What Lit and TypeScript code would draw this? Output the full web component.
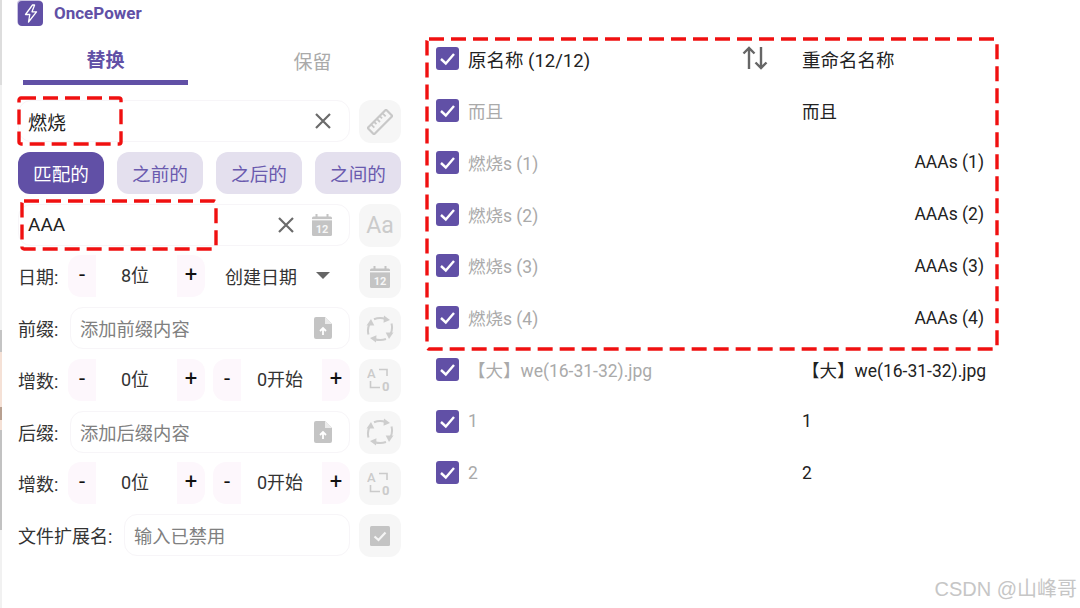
import { LitElement, html, css, svg } from "lit";
import { customElement } from "lit/decorators.js";

const x = svg`<svg width="18" height="18" viewBox="0 0 18 18"><path d="M2 2L16 16M16 2L2 16" stroke="#6b6b6b" stroke-width="2.2" fill="none"/></svg>`;
const cal = svg`<svg width="20" height="22" viewBox="0 0 20 22"><rect x="0" y="2.5" width="20" height="19.5" rx="1.5" fill="#c4c4c4"/><rect x="3.5" y="0" width="2" height="4" fill="#c4c4c4"/><rect x="14.5" y="0" width="2" height="4" fill="#c4c4c4"/><rect x="0" y="5" width="20" height="1.4" fill="#f6f6f6"/><text x="10" y="18.5" text-anchor="middle" font-family="Roboto" font-size="11" font-weight="700" fill="#f6f6f6">12</text></svg>`;
const fileUp = svg`<svg width="18" height="22" viewBox="0 0 18 22"><path d="M2 0H11L18 7V20a2 2 0 0 1-2 2H2a2 2 0 0 1-2-2V2a2 2 0 0 1 2-2Z" fill="#c4c4c4"/><path d="M11 0L18 7H11Z" fill="#ececec"/><path d="M9 18V11.5M6 14L9 11L12 14" stroke="#fff" stroke-width="1.8" fill="none"/></svg>`;
const sync = svg`<svg width="28" height="28" viewBox="0 0 28 28" fill="none" stroke="#cdcdcd" stroke-width="2"><path d="M8 4.2Q14 1.8 19.5 4"/><path d="M18 .5L24 5L17.5 7.8Z" fill="#cdcdcd" stroke="none"/><path d="M25.5 8.5Q27 14 24.5 19"/><path d="M27.5 17.5L23 24L19.7 17.5Z" fill="#cdcdcd" stroke="none"/><path d="M20 24Q14 26.2 8.5 24"/><path d="M10 27.5L4 23L10.5 20.2Z" fill="#cdcdcd" stroke="none"/><path d="M2.5 19.5Q1 14 3.5 9"/><path d="M.5 10.5L5 4L8.3 10.5Z" fill="#cdcdcd" stroke="none"/></svg>`;
const ruler = svg`<svg width="26" height="26" viewBox="0 0 26 26"><g transform="rotate(-45 13 13)"><rect x="0" y="8.5" width="26" height="9" rx="1" fill="none" stroke="#c8c8c8" stroke-width="2.2"/><path d="M5 9V13M9 9V12M13 9V13M17 9V12M21 9V13" stroke="#c8c8c8" stroke-width="1.8"/></g></svg>`;
const seq = svg`<svg width="26" height="26" viewBox="0 0 26 26" fill="none"><text x="0" y="11" font-family="Roboto" font-size="13" font-weight="500" fill="#cbcbcb">A</text><text x="15" y="24" font-family="Roboto" font-size="13" font-weight="700" fill="#cbcbcb">0</text><path d="M12 2.5H20V9M3.5 14V20.5H13" stroke="#cbcbcb" stroke-width="1.6"/></svg>`;
const checkGrey = svg`<svg width="20" height="20" viewBox="0 0 20 20"><rect width="20" height="20" rx="1.5" fill="#c4c4c4"/><path d="M4.5 10.5L8.5 14L15.5 6.5" stroke="#f5f5f5" stroke-width="2.2" fill="none"/></svg>`;
const swap = svg`<svg width="26" height="24" viewBox="0 0 26 24" fill="none" stroke="#666" stroke-width="2.4"><path d="M7 23V2M1.5 7.5L7 2L12.5 7.5"/><path d="M19 1V22M13.5 16.5L19 22L24.5 16.5"/></svg>`;
const tick = svg`<svg width="23" height="23" viewBox="0 0 23 23"><path d="M5 12L9.8 16.5L18 7" stroke="#fff" stroke-width="2.4" fill="none"/></svg>`;
const bolt = svg`<svg width="14" height="19" viewBox="0 0 14 19" fill="none" stroke="#fff" stroke-width="1.3" stroke-linejoin="round"><path d="M8.5 1L1.5 10.5H5.8L4.5 18L12.5 7.8H8L10.6 1Z"/></svg>`;

const rows = [
  { a: "而且", b: "而且", end: false },
  { a: "燃烧s (1)", b: "AAAs (1)", end: true },
  { a: "燃烧s (2)", b: "AAAs (2)", end: true },
  { a: "燃烧s (3)", b: "AAAs (3)", end: true },
  { a: "燃烧s (4)", b: "AAAs (4)", end: true },
  { a: "【大】we(16-31-32).jpg", b: "【大】we(16-31-32).jpg", end: false },
  { a: "1", b: "1", end: false },
  { a: "2", b: "2", end: false },
];

@customElement("app-root")
export class AppRoot extends LitElement {
  static styles = css`
    :host { display: block; position: relative; width: 1080px; height: 608px; overflow: hidden; background: #fff; color: #222;
      font-family: Roboto, "Noto Sans CJK SC", sans-serif; font-size: 18px; }
    * { box-sizing: border-box; }
    .page { display: grid; grid-template-columns: 383px 572px; column-gap: 25px; padding-left: 18px; height: 608px; }
    .strip { position: absolute; left: 0; top: 0; width: 2px; height: 608px;
      background: linear-gradient(#ddd 0 85px, #f1f1f1 85px 330px, #c4c4c4 330px 352px, #f5e1d6 352px 407px, #b8a090 407px 420px, #f5e1d6 420px 430px, #c2c2c2 430px 530px, #f1f1f1 530px); }
    .brand { display: flex; align-items: center; gap: 11px; height: 26px; color: #6150a6; font-size: 17px; font-weight: 700; }
    .logo { width: 25px; height: 25px; border-radius: 4px; background: #6150a6; display: flex; align-items: center; justify-content: center; box-shadow: -1px -1px 0 #c9c2e2; }
    .tabs { display: grid; grid-template-columns: 165px 165px; column-gap: 42px; margin-left: 5px; height: 59px; margin-bottom: 15px; }
    .tab { display: flex; align-items: center; justify-content: center; padding-top: 9px; font-size: 19px; color: #aaa; }
    .tab.on { color: #6150a6; font-weight: 700; border-bottom: 5px solid #6150a6; padding-top: 10px; }
    .form { display: grid; gap: 9.75px; }
    .line { display: grid; grid-template-columns: 1fr 42px; column-gap: 9px; height: 42px; align-items: stretch; }
    .main { display: flex; align-items: center; min-width: 0; padding-bottom: 1px; }
    .label { flex: none; width: 50px; white-space: nowrap; font-size: 18px; color: #333; }
    .label.wide { width: 104px; }
    .field { flex: 1; height: 42px; display: flex; align-items: center; padding: 0 17px 0 9px; border: 1.5px solid #f7f5f8; border-radius: 13px; background: #fff; min-width: 0; font-size: 18.3px; }
    .label + .field { margin-left: 2px; }
    .field .v { flex: 1; color: #222; font-size: 19px; }
    .field .ph { flex: 1; color: #808080; }
    .ico { display: flex; align-items: center; justify-content: center; }
    .ico.x { width: 18px; margin-right: 17px; }
    .ico.x.solo { margin-right: 0; }
    .btn { background: #f6f6f6; border-radius: 12px; display: flex; align-items: center; justify-content: center; }
    .aa { font-size: 23px; color: #cbcbcb; font-weight: 400; }
    .chips { display: grid; grid-template-columns: repeat(4, 86px); column-gap: 13px; height: 42px; }
    .chip { display: flex; align-items: center; justify-content: center; border-radius: 12px; background: #e4e0ee; color: #6a5aae; font-size: 18.6px; }
    .chip.on { background: #6150a6; color: #fff; }
    .stepper { flex: 1; height: 42px; display: grid; grid-template-columns: 28px 1fr 28px; border-radius: 13px; overflow: hidden; background: #fdf7fc; }
    .stepper + .stepper { margin-left: 8px; }
    .stepper span { display: flex; align-items: center; justify-content: center; }
    .stepper .mid { background: #fff; color: #333; font-size: 18px; padding: 0 3px 4px 0; }
    .stepper .pm { font-size: 22px; color: #111; padding-bottom: 3px; }
    .drop { width: 137px; margin-left: 8px; display: flex; align-items: center; padding-left: 12px; color: #333; padding-bottom: 1px; }
    .drop i { margin-left: 19px; width: 0; height: 0; border-left: 7px solid transparent; border-right: 7px solid transparent; border-top: 7px solid #666; }
    .list { display: grid; grid-auto-rows: 51.75px; padding-top: 33px; align-content: start; font-size: 17.5px; }
    .row { display: grid; grid-template-columns: 366px 182px; padding-left: 10px; align-items: center; }
    .src { display: flex; align-items: center; gap: 9px; color: #aaa; white-space: nowrap; }
    .head { font-size: 18.5px; }
    .head .src { color: #222; position: relative; }
    .swap { position: absolute; left: 306px; top: 0; }
    .box { width: 23px; height: 23px; flex: none; background: #6150a6; border-radius: 3px; }
    .dst { color: #222; white-space: nowrap; }
    .dst.end { text-align: right; }
    .mark { position: absolute; pointer-events: none; fill: none; stroke: #f01010; stroke-width: 3.4; stroke-dasharray: 15 7; stroke-linejoin: round; }
    .wm { position: absolute; right: 3px; bottom: 6px; font-size: 20px; color: #c6c6c6; font-family: "Liberation Sans", "Noto Sans CJK SC", sans-serif; white-space: nowrap; }
  `;

  private stepper(v: string) {
    return html`<div class="stepper"><span class="pm">-</span><span class="mid">${v}</span><span class="pm">+</span></div>`;
  }

  render() {
    return html`
      <div class="strip"></div>
      <div class="page">
        <section>
          <div class="brand"><div class="logo">${bolt}</div>OncePower</div>
          <div class="tabs"><div class="tab on">替换</div><div class="tab">保留</div></div>
          <div class="form">
            <div class="line">
              <div class="main"><div class="field"><span class="v">燃烧</span><span class="ico x solo">${x}</span></div></div>
              <div class="btn">${ruler}</div>
            </div>
            <div class="chips">
              <div class="chip on">匹配的</div><div class="chip">之前的</div><div class="chip">之后的</div><div class="chip">之间的</div>
            </div>
            <div class="line">
              <div class="main"><div class="field"><span class="v">AAA</span><span class="ico x">${x}</span><span class="ico">${cal}</span></div></div>
              <div class="btn"><span class="aa">Aa</span></div>
            </div>
            <div class="line">
              <div class="main"><span class="label">日期:</span>${this.stepper("8位")}<div class="drop">创建日期<i></i></div></div>
              <div class="btn">${cal}</div>
            </div>
            <div class="line">
              <div class="main"><span class="label">前缀:</span><div class="field"><span class="ph">添加前缀内容</span><span class="ico">${fileUp}</span></div></div>
              <div class="btn">${sync}</div>
            </div>
            <div class="line">
              <div class="main"><span class="label">增数:</span>${this.stepper("0位")}${this.stepper("0开始")}</div>
              <div class="btn">${seq}</div>
            </div>
            <div class="line">
              <div class="main"><span class="label">后缀:</span><div class="field"><span class="ph">添加后缀内容</span><span class="ico">${fileUp}</span></div></div>
              <div class="btn">${sync}</div>
            </div>
            <div class="line">
              <div class="main"><span class="label">增数:</span>${this.stepper("0位")}${this.stepper("0开始")}</div>
              <div class="btn">${seq}</div>
            </div>
            <div class="line">
              <div class="main"><span class="label wide">文件扩展名:</span><div class="field"><span class="ph">输入已禁用</span></div></div>
              <div class="btn">${checkGrey}</div>
            </div>
          </div>
        </section>
        <section class="list">
          <div class="row head">
            <div class="src"><div class="box">${tick}</div>原名称 (12/12)<span class="swap ico">${swap}</span></div>
            <div class="dst">重命名名称</div>
          </div>
          ${rows.map(r => html`<div class="row">
            <div class="src"><div class="box">${tick}</div>${r.a}</div>
            <div class="dst ${r.end ? "end" : ""}">${r.b}</div>
          </div>`)}
        </section>
      </div>
      <svg class="mark" style="left:17px;top:96px" width="106" height="50"><rect x="2" y="2" width="102" height="46" rx="2"/></svg>
      <svg class="mark" style="left:20px;top:199px" width="198" height="52"><rect x="2" y="2" width="194" height="48" rx="2"/></svg>
      <svg class="mark" style="left:425px;top:37px" width="574" height="314"><rect x="2" y="2" width="570" height="310" rx="2"/></svg>
      <div class="wm">CSDN @山峰哥</div>
    `;
  }
}
